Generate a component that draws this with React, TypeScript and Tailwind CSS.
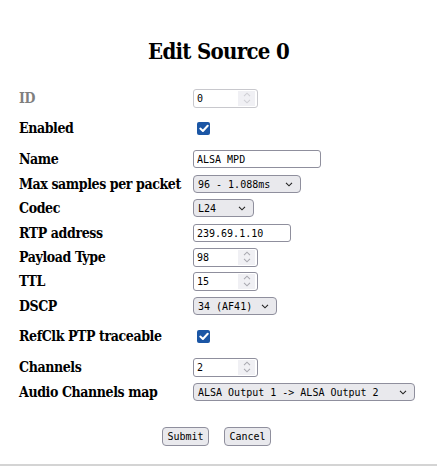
import React from "react";

const monoCls = "font-[family-name:DejaVu_Sans_Mono,monospace] font-normal tracking-normal text-[10px] text-black";

function Chevron({ up = false, className = "" }: { up?: boolean; className?: string }) {
  return (
    <svg width="8" height="5" viewBox="0 0 8 5" className={className}>
      <path d={up ? "M1 4.2 L4 1.2 L7 4.2" : "M1 0.8 L4 3.8 L7 0.8"} fill="none" stroke="currentColor" strokeWidth="1.1" />
    </svg>
  );
}

function NumberBox({ value, disabled = false }: { value: string; disabled?: boolean }) {
  return (
    <div
      className={`flex items-center w-[65px] h-[19px] border rounded-[3px] bg-white ${
        disabled ? "border-[#c8c8cd]" : "border-[#8f8f9d]"
      }`}
    >
      <input
        readOnly
        disabled={disabled}
        value={value}
        className={`${monoCls} w-[42px] pl-[3px] outline-none bg-transparent ${disabled ? "text-[#6f6f6f]" : ""}`}
      />
      <div
        className={`ml-auto mr-[2px] w-[17px] h-[15px] bg-[#f0f0f4] flex flex-col items-center justify-center gap-[2px] ${
          disabled ? "text-[#d0d0d5]" : "text-[#a9a9b0]"
        }`}
      >
        <Chevron up />
        <Chevron />
      </div>
    </div>
  );
}

function TextBox({ value, w }: { value: string; w: string }) {
  return (
    <input
      readOnly
      value={value}
      className={`${monoCls} ${w} h-[18px] border border-[#8f8f9d] rounded-[3px] bg-white pl-[3px] outline-none`}
    />
  );
}

function SelectBox({ value, w }: { value: string; w: string }) {
  return (
    <div
      className={`${w} h-[18px] border border-[#8f8f9d] rounded-[4px] bg-[#e9e9ed] flex items-center pl-[4px] pr-[7px] ${monoCls}`}
    >
      <span className="whitespace-pre">{value}</span>
      <Chevron className="ml-auto text-[#222]" />
    </div>
  );
}

function Check() {
  return (
    <div className="ml-[4px] w-[13px] h-[13px] rounded-[2px] bg-[#1b56a5] flex items-center justify-center">
      <svg width="10" height="9" viewBox="0 0 10 9">
        <path d="M1.3 4.6 L3.9 7 L8.7 1.8" fill="none" stroke="white" strokeWidth="2" strokeLinecap="round" strokeLinejoin="round" />
      </svg>
    </div>
  );
}

function Row({ name, mt, muted = false, children }: { name: string; mt: string; muted?: boolean; children: React.ReactNode }) {
  return (
    <div className={`grid grid-cols-[174px_1fr] items-center h-[24px] ${mt}`}>
      <span className={`whitespace-nowrap ${muted ? "text-[#7f7f7f]" : "text-black"}`}>{name}</span>
      <div className="flex items-center">{children}</div>
    </div>
  );
}

function Btn({ children }: { children: React.ReactNode }) {
  return (
    <button
      type="button"
      className={`${monoCls} w-[47px] h-[19px] border border-[#8f8f9d] rounded-[4px] bg-[#e9e9ed]`}
    >
      {children}
    </button>
  );
}

export default function App() {
  return (
    <div className="w-[437px] h-[471px] bg-white font-[family-name:DejaVu_Serif_Condensed,DejaVu_Serif,serif] font-stretch-condensed">
      <h2 className="text-center font-bold text-[22px] tracking-[-0.7px] leading-[30px] pt-[36px] h-[86px] text-black">
        Edit Source 0
      </h2>
      <form className="pl-[19px] text-[14px] tracking-[-0.4px] font-bold">
        <Row name="ID" mt="mt-0" muted>
          <NumberBox value="0" disabled />
        </Row>
        <Row name="Enabled" mt="mt-[6px]">
          <Check />
        </Row>
        <Row name="Name" mt="mt-[7px]">
          <TextBox value="ALSA MPD" w="w-[128px]" />
        </Row>
        <Row name="Max samples per packet" mt="mt-[1px]">
          <SelectBox value="96 - 1.088ms" w="w-[108px]" />
        </Row>
        <Row name="Codec" mt="mt-0">
          <SelectBox value="L24" w="w-[61px]" />
        </Row>
        <Row name="RTP address" mt="mt-[1px]">
          <TextBox value="239.69.1.10" w="w-[98px]" />
        </Row>
        <Row name="Payload Type" mt="mt-0">
          <NumberBox value="98" />
        </Row>
        <Row name="TTL" mt="mt-0">
          <NumberBox value="15" />
        </Row>
        <Row name="DSCP" mt="mt-[1px]">
          <SelectBox value="34 (AF41)" w="w-[84px]" />
        </Row>
        <Row name="RefClk PTP traceable" mt="mt-[6px]">
          <Check />
        </Row>
        <Row name="Channels" mt="mt-[7px]">
          <NumberBox value="2" />
        </Row>
        <Row name="Audio Channels map" mt="mt-[1px]">
          <SelectBox value="ALSA Output 1 -> ALSA Output 2" w="w-[222px]" />
        </Row>
        <div className="flex justify-center gap-[15px] mt-[23px] ml-[-23px]">
          <Btn>Submit</Btn>
          <Btn>Cancel</Btn>
        </div>
      </form>
      <hr className="mt-[18px] border-0 border-t-2 border-[#d4d4d4]" />
    </div>
  );
}
